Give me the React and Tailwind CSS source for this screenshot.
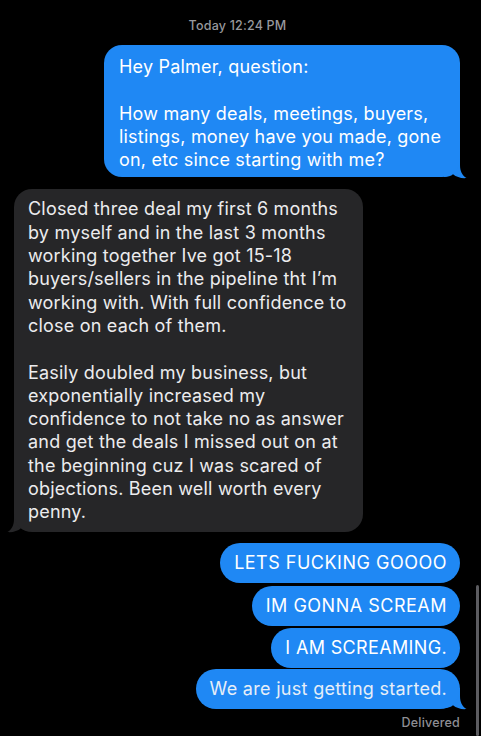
import React from "react";

const font = { fontFamily: "Inter, 'Liberation Sans', Arial, sans-serif" };

const TAIL_D =
  "M0 0 H16 V8 C16 14 18 18.5 22.5 21 C17.5 21.6 12.5 20 9 17.2 C7 19 4 20 0 20 Z";

function TailRight({ color }) {
  return (
    <svg
      className="absolute right-[-8px]"
      width="24"
      height="22"
      viewBox="0 0 24 22"
      style={{ bottom: "-1.5px" }}
    >
      <path d={TAIL_D} fill={color} />
    </svg>
  );
}

function TailLeft({ color }) {
  return (
    <svg
      className="absolute left-[-8px]"
      width="24"
      height="22"
      viewBox="0 0 24 22"
      style={{ bottom: "-1.5px" }}
    >
      <g transform="translate(24 0) scale(-1 1)">
        <path d={TAIL_D} fill={color} />
      </g>
    </svg>
  );
}

const Lines = ({ lines }) =>
  lines.map((l, i) => (
    <div key={i} className="whitespace-nowrap h-[23.3px]">
      {l === "" ? "\u00a0" : l}
    </div>
  ));

function Pill({ children, className = "", tail, track = "tracking-[0.5px]" }) {
  return (
    <div className={`relative self-end mr-[21px] ${className}`}>
      {tail && <TailRight color="#1f88f4" />}
      <div
        className={`relative h-[40px] flex items-center pl-[14px] pr-[13px] rounded-[20px] bg-[#1f88f4] text-white text-[18px] whitespace-nowrap ${track}`}
      >
        {children}
      </div>
    </div>
  );
}

export default function App() {
  return (
    <div
      className="relative w-[481px] h-[736px] bg-black overflow-hidden flex flex-col"
      style={font}
    >
      <div className="mt-[18px] h-[16px] leading-[16px] text-center text-[12.5px] font-medium text-[#98989d] pr-[6px] tracking-[0.2px]">
        Today 12:24 PM
      </div>

      <div className="relative self-end mr-[21px] mt-[11px]">
        <TailRight color="#1f88f4" />
        <div className="relative w-[356px] rounded-[18px] bg-[#1f88f4] text-white text-[18px] tracking-[0.2px] leading-[23.3px] pl-[15px] pr-[10px] pt-[10px] pb-[6px]">
          <Lines
            lines={[
              "Hey Palmer, question:",
              "",
              "How many deals, meetings, buyers,",
              "listings, money have you made, gone",
              "on, etc since starting with me?",
            ]}
          />
        </div>
      </div>

      <div className="relative self-start ml-[14px] mt-[12px]">
        <TailLeft color="#262628" />
        <div className="relative w-[349px] rounded-[18px] bg-[#262628] text-[#ececee] text-[18px] tracking-[0.2px] leading-[23.3px] pl-[14px] pr-[10px] pt-[8px] pb-[8px]">
          <Lines
            lines={[
              "Closed three deal my first 6 months",
              "by myself and in the last 3 months",
              "working together Ive got 15-18",
              "buyers/sellers in the pipeline tht I\u2019m",
              "working with. With full confidence to",
              "close on each of them.",
              "",
              "Easily doubled my business, but",
              "exponentially increased my",
              "confidence to not take no as answer",
              "and get the deals I missed out on at",
              "the beginning cuz I was scared of",
              "objections. Been well worth every",
              "penny.",
            ]}
          />
        </div>
      </div>

      <Pill className="mt-[11px]">LETS FUCKING GOOOO</Pill>
      <Pill className="mt-[3px]">IM GONNA SCREAM</Pill>
      <Pill className="mt-[2px]" track="tracking-[0.35px]">I AM SCREAMING.</Pill>
      <Pill className="mt-[1px]" tail track="tracking-[0.3px]">
        <span className="text-[#e6eef8]">We are just getting started.</span>
      </Pill>

      <div className="self-end mr-[21px] mt-[6px] text-[12.5px] font-medium text-[#8e8e93] leading-[16px] tracking-[0.2px]">
        Delivered
      </div>

      <div className="absolute right-[2px] top-[585px] w-[3px] h-[151px] rounded-full bg-[#5c5c60]" />
    </div>
  );
}
